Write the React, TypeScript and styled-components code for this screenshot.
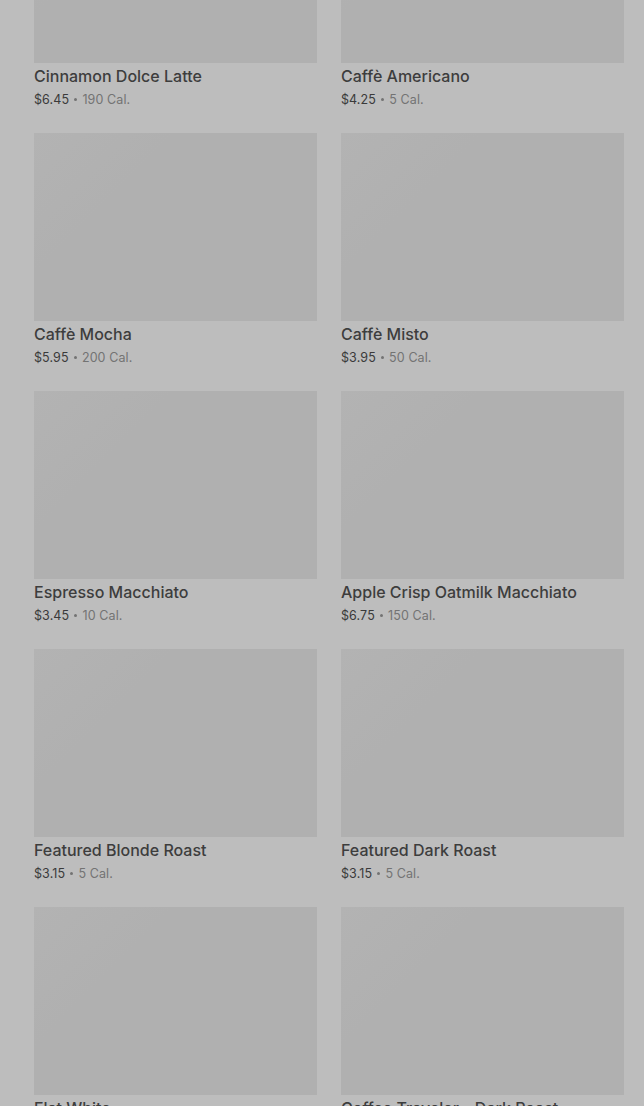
import styled, { createGlobalStyle } from "styled-components";

const GlobalStyle = createGlobalStyle`
  html, body {
    margin: 0;
    padding: 0;
    background: #bdbdbd;
    font-family: Inter, Roboto, "Liberation Sans", Arial, sans-serif;
    overflow: hidden;
  }
`;

const Page = styled.div`
  width: 644px;
  height: 1106px;
  overflow: hidden;
  background: #bdbdbd;
`;

const Grid = styled.div`
  display: grid;
  grid-template-columns: 283px 283px;
  column-gap: 24px;
  padding: 0 20px 0 34px;
  margin-top: -125px;
`;

const Card = styled.div`
  display: flex;
  flex-direction: column;
  height: 258px;
`;

const Thumb = styled.div`
  width: 100%;
  height: 188px;
  background: #b0b0b0;
  background-image: linear-gradient(135deg, #b3b3b3 0%, #b0b0b0 30%, #b0b0b0 100%);
`;

const Name = styled.div`
  margin-top: 1px;
  font-size: 16px;
  line-height: 24px;
  font-weight: 500;
  color: #3d3d3d;
  white-space: nowrap;
`;

const Meta = styled.div`
  padding-top: 1px;
  font-size: 12.5px;
  line-height: 22px;
  color: #3a3a3a;
  letter-spacing: 0.1px;
`;

const Dot = styled.span`
  display: inline-block;
  width: 3px;
  height: 3px;
  border-radius: 50%;
  background: #737373;
  vertical-align: middle;
  margin: 0 1.5px 2px;
`;

const Cal = styled.span`
  color: #737373;
`;

type Drink = { name: string; price: string; cal: string };

const drinks: Drink[] = [
  { name: "Cinnamon Dolce Latte", price: "$6.45", cal: "190 Cal." },
  { name: "Caffè Americano", price: "$4.25", cal: "5 Cal." },
  { name: "Caffè Mocha", price: "$5.95", cal: "200 Cal." },
  { name: "Caffè Misto", price: "$3.95", cal: "50 Cal." },
  { name: "Espresso Macchiato", price: "$3.45", cal: "10 Cal." },
  { name: "Apple Crisp Oatmilk Macchiato", price: "$6.75", cal: "150 Cal." },
  { name: "Featured Blonde Roast", price: "$3.15", cal: "5 Cal." },
  { name: "Featured Dark Roast", price: "$3.15", cal: "5 Cal." },
  { name: "Flat White", price: "$5.25", cal: "170 Cal." },
  { name: "Coffee Traveler - Dark Roast", price: "$19.95", cal: "5 Cal." },
];

const App: React.FC = () => {
  return (
    <>
      <GlobalStyle />
      <Page>
        <Grid>
          {drinks.map((d, i) => (
            <Card key={i}>
              <Thumb />
              <Name>{d.name}</Name>
              <Meta>
                {d.price} <Dot /> <Cal>{d.cal}</Cal>
              </Meta>
            </Card>
          ))}
        </Grid>
      </Page>
    </>
  );
};

export default App;
